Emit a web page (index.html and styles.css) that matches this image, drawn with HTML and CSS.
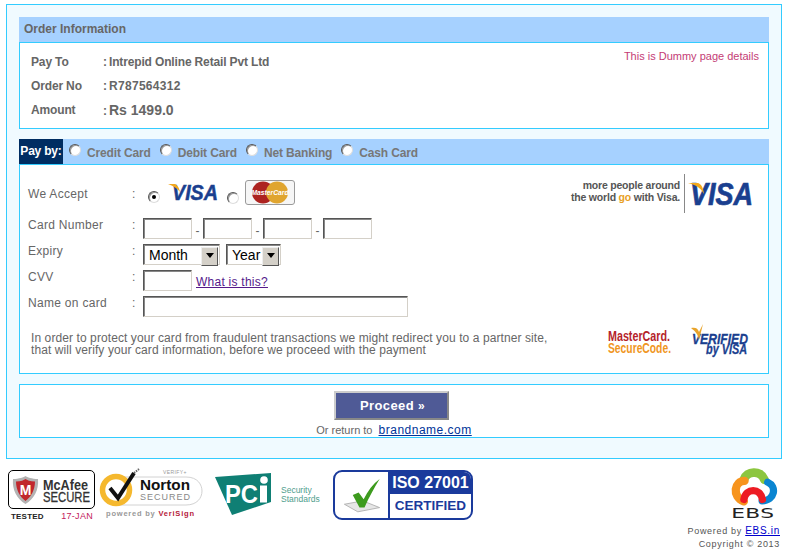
FILE: index.html
```html
<!DOCTYPE html>
<html lang="en">
<head>
<meta charset="utf-8">
<title>Payment</title>
<link rel="stylesheet" href="styles.css">
</head>
<body>
<main class="wrap">
  <section class="panel">
    <h2 class="panel-head">Order Information</h2>
    <div class="panel-body order">
      <dl class="order-list">
        <div class="order-row"><dt>Pay To</dt><dd><span class="sep">:</span>Intrepid Online Retail Pvt Ltd</dd></div>
        <div class="order-row"><dt>Order No</dt><dd class="order-no"><span class="sep">:</span>R787564312</dd></div>
        <div class="order-row"><dt>Amount</dt><dd class="amount"><span class="sep">:</span>Rs 1499.0</dd></div>
      </dl>
      <p class="dummy">This is Dummy page details</p>
    </div>
  </section>

  <section class="panel pay">
    <div class="pay-head">
      <span class="pay-by">Pay by:</span>
      <label class="tab"><input type="radio" name="mode" class="radio">Credit Card</label>
      <label class="tab"><input type="radio" name="mode" class="radio">Debit Card</label>
      <label class="tab"><input type="radio" name="mode" class="radio">Net Banking</label>
      <label class="tab"><input type="radio" name="mode" class="radio">Cash Card</label>
    </div>
    <div class="panel-body card">
      <div class="form-top">
        <div class="form-grid">
          <div class="lbl accept-lbl">We Accept</div><div class="colon accept-lbl">:</div>
          <div class="accept">
            <input type="radio" name="brand" class="radio" checked>
            <svg class="visa-small" viewBox="0 0 50 19" aria-label="Visa">
              <text x="4" y="17" textLength="46" lengthAdjust="spacingAndGlyphs" class="visa-text vs">VISA</text>
              <path d="M0 1 L7 1 C9 2 11 4 12 9 C9 5 5 3 0 1Z" fill="#f2a81d"/>
            </svg>
            <input type="radio" name="brand" class="radio">
            <span class="mc-badge">
              <svg viewBox="0 0 44 23" class="mc-svg">
                <circle cx="15" cy="11.500" r="11" fill="#ad2320"/>
                <circle cx="29" cy="11.500" r="11" fill="#e0a52f"/>
                <text x="22" y="14" text-anchor="middle" textLength="37" lengthAdjust="spacingAndGlyphs" class="mc-text">MasterCard</text>
              </svg>
            </span>
          </div>

          <div class="lbl">Card Number</div><div class="colon">:</div>
          <div class="fields">
            <input class="field num" type="text"><span class="dash">-</span>
            <input class="field num" type="text"><span class="dash">-</span>
            <input class="field num" type="text"><span class="dash">-</span>
            <input class="field num" type="text">
          </div>

          <div class="lbl">Expiry</div><div class="colon">:</div>
          <div class="fields selects">
            <span class="sel sel-month"><select><option>Month</option></select></span>
            <span class="sel sel-year"><select><option>Year</option></select></span>
          </div>

          <div class="lbl">CVV</div><div class="colon">:</div>
          <div class="fields">
            <input class="field num" type="text"><a class="what" href="#">What is this?</a>
          </div>

          <div class="lbl">Name on card</div><div class="colon">:</div>
          <div class="fields"><input class="field name" type="text"></div>
        </div>
        <div class="visa-ad">
          <p class="visa-slogan">more people around<br>the world <span class="go">go</span> with Visa.</p>
          <span class="visa-rule"></span>
          <svg class="visa-large" viewBox="0 0 66 24" aria-label="Visa">
            <text x="2" y="23" textLength="63" lengthAdjust="spacingAndGlyphs" class="visa-text vl">VISA</text>
            <path d="M0 1 L10 1 C13 2 15 5 16 12 C13 6 8 3 0 1Z" fill="#f2a81d"/>
          </svg>
        </div>
      </div>
      <div class="form-foot">
        <p class="notice">In order to protect your card from fraudulent transactions we might redirect you to a partner site,<br>that will verify your card information, before we proceed with the payment</p>
        <div class="secure">
          <svg class="mc-secure" viewBox="0 0 64 26">
            <text x="0" y="12" textLength="62" lengthAdjust="spacingAndGlyphs" class="msc red">MasterCard.</text>
            <text x="0" y="24" textLength="63" lengthAdjust="spacingAndGlyphs" class="msc orange">SecureCode.</text>
          </svg>
          <svg class="verified" viewBox="0 0 60 32">
            <text x="2" y="20" textLength="56" lengthAdjust="spacingAndGlyphs" class="vbv">VERIFIED</text>
            <text x="16" y="30" textLength="41" lengthAdjust="spacingAndGlyphs" class="vbv">by VISA</text>
            <path d="M1 4 C5 3 8 4 9 8 L13 0 L9 16 C8 10 5 7 1 4Z" fill="#e8a32a"/>
          </svg>
        </div>
      </div>
    </div>
  </section>

  <section class="proceed-box">
    <button class="proceed" type="button">Proceed <span class="chev">»</span></button>
    <p class="return">Or return to <a href="#">brandname.com</a></p>
  </section>
</main>

<footer class="foot">
  <div class="seals">
    <div class="mcafee">
      <div class="mcafee-box">
        <svg class="mcafee-svg" viewBox="0 0 85 37">
          <path d="M4 8 C10 8 15 6 16.500 5 C18 6 23 8 29 8 C30 19 25 28 16.500 33 C8 28 3 19 4 8Z" fill="#b3b3b3"/>
          <path d="M7 10.500 C12 10.500 15 9 16.500 8 C18 9 21 10.500 26 10.500 C26 19 22 26 16.500 30 C11 26 7 19 7 10.500Z" fill="#c1272d"/>
          <text x="16.500" y="24" text-anchor="middle" class="shield-m">M</text>
          <text x="34" y="19" textLength="45" lengthAdjust="spacingAndGlyphs" class="mcafee-name">McAfee</text>
          <text x="34" y="31" textLength="47" lengthAdjust="spacingAndGlyphs" class="mcafee-secure">SECURE</text>
        </svg>
      </div>
      <div class="mcafee-meta"><span class="tested">TESTED</span><span class="date">17-JAN</span></div>
    </div>

    <svg class="norton" viewBox="0 0 106 52">
      <text x="65" y="6" class="nt-verify">VERIFY+</text>
      <path d="M18 9 H88 C100 9 104 17 104 23 C104 30 99 37 88 37 H18Z" fill="#fff" stroke="#d2d2d2" stroke-width="1"/>
      <circle cx="18" cy="22" r="13.500" fill="#fff" stroke="#f5b82e" stroke-width="5.500"/>
      <path d="M12 20 L20 30 L36 5" fill="none" stroke="#111" stroke-width="4"/>
      <path d="M36 5 L41 1" fill="none" stroke="#666" stroke-width="2" stroke-dasharray="1.500 1"/>
      <text x="42" y="22" textLength="50" lengthAdjust="spacingAndGlyphs" class="nt-name">Norton</text>
      <text x="42" y="32" textLength="50" class="nt-secured">SECURED</text>
      <text x="8" y="48" textLength="88" class="nt-power">powered by <tspan class="nt-vs">VeriSign</tspan></text>
    </svg>

    <svg class="pci" viewBox="0 0 110 46">
      <path d="M0 5 L56 1 L56 30 L17 43Z" fill="#0f7f74"/>
      <text x="10" y="31" textLength="33" lengthAdjust="spacingAndGlyphs" class="pci-l">PC</text>
      <rect x="45" y="13.500" width="7" height="17" fill="#fff"/>
      <circle cx="49" cy="8" r="3.800" fill="#fff"/>
      <text x="66" y="21" class="pci-s">Security</text>
      <text x="66" y="30" class="pci-s">Standards</text>
    </svg>

    <div class="iso">
      <div class="iso-check">
        <svg viewBox="0 0 50 42" class="iso-svg">
          <path d="M4 32 L26 28 L46 36 L20 41Z" fill="#e6e6e6" stroke="#aaa"/>
          <path d="M14 21 L21 18 L27 26 C32 16 38 8 46 2 C40 12 33 24 28 36 L22 36Z" fill="#3d9b1e"/>
        </svg>
      </div>
      <div class="iso-text">
        <div class="iso-top">ISO 27001</div>
        <div class="iso-bot">CERTIFIED</div>
      </div>
    </div>
  </div>

  <div class="ebs">
    <svg class="ebs-logo" viewBox="205 20 145 160">
      <path d="M250 58 C258 32 300 28 312 58" fill="none" stroke="#8cc63f" stroke-width="27" stroke-linecap="round"/>
      <path d="M252 62 C222 62 212 108 250 124" fill="none" stroke="#f7941d" stroke-width="25" stroke-linecap="round"/>
      <path d="M322 66 C350 78 344 122 305 122" fill="none" stroke="#0a85d1" stroke-width="22" stroke-linecap="round"/>
      <path d="M250 118 C256 82 300 82 306 118" fill="none" stroke="#ed1c24" stroke-width="22" stroke-linecap="round"/>
      <text x="277" y="175" text-anchor="middle" textLength="130" lengthAdjust="spacingAndGlyphs" class="ebs-name">EBS</text>
    </svg>
    <p class="powered">Powered by <a href="#">EBS.in</a></p>
    <p class="copy">Copyright © 2013</p>
  </div>
</footer>
</body>
</html>
```

FILE: styles.css
```css
* { box-sizing: border-box; }
html, body { margin: 0; padding: 0; }
body {
  background: #fff;
  color: #666;
  font-family: "Liberation Sans", Arial, sans-serif;
  font-size: 12px;
  height: 554px;
  overflow: hidden;
}
p, h2, dl, dd, dt { margin: 0; }
svg { overflow: visible; }

.wrap {
  width: 776px;
  height: 455px;
  margin: 4px 0 0 6px;
  padding: 12px;
  border: 1px solid #33ccff;
  background: #f0faff;
}
.panel-head {
  height: 25px;
  padding: 0 5px;
  background: #a6d1ff;
  color: #666;
  font-size: 12px;
  line-height: 24px;
  font-weight: bold;
}
.panel-body {
  border: 1px solid #33ccff;
  background: #fff;
}
.order {
  height: 87px;
  display: flex;
  justify-content: space-between;
  padding: 7px 9px 0 11px;
}
.order-row {
  display: flex;
  height: 24px;
  align-items: center;
  font-weight: bold;
  letter-spacing: -0.15px;
}
.order-row dt { width: 72px; }
.order-row dd { white-space: nowrap; }
.sep { display: inline-block; width: 6px; font-size: 12px; }
.order-row .order-no { letter-spacing: 0.3px; }
.order-row .amount { font-size: 14px; letter-spacing: 0; }
.dummy { color: #c43c75; font-size: 11px; line-height: 12px; }

.pay { margin-top: 10px; }
.pay-head {
  display: flex;
  align-items: center;
  height: 25px;
  background: #a6d1ff;
}
.pay-by {
  width: 44px;
  height: 25px;
  line-height: 24px;
  background: #002d62;
  color: #fff;
  font-weight: bold;
  text-align: center;
  letter-spacing: -0.2px;
  margin-right: 6px;
  white-space: nowrap;
}
.tab {
  display: flex;
  align-items: center;
  font-weight: bold;
  color: #777;
  margin-right: 9px;
  padding-top: 3px;
  letter-spacing: -0.15px;
  white-space: nowrap;
}
.tab .radio { margin: -7px 6px 0 0; }

.radio {
  appearance: none;
  -webkit-appearance: none;
  width: 12px;
  height: 12px;
  margin: 0;
  flex: none;
  border-radius: 50%;
  background: #fff;
  border: 1px solid;
  border-color: #555 #ddd #ddd #555;
  box-shadow: inset 1px 1px 0 #999;
  position: relative;
}
.radio:checked::after {
  content: "";
  position: absolute;
  left: 3px;
  top: 3px;
  width: 4px;
  height: 4px;
  border-radius: 50%;
  background: #000;
}

.card {
  height: 210px;
  padding: 0;
}
.form-top {
  display: flex;
  justify-content: space-between;
  padding: 9px 14px 0 8px;
}
.form-grid {
  display: grid;
  grid-template-columns: 104px 11px 1fr;
  grid-template-rows: 44px 26px 26px 26px 26px;
  align-items: start;
}
.form-grid > .accept { grid-column: 3; height: 44px; }
.lbl, .colon {
  letter-spacing: 0.3px;
  line-height: 14px;
  white-space: nowrap;
}
.accept-lbl { padding-top: 13px; }
.accept {
  display: flex;
  align-items: flex-start;
}
.accept .radio { margin: 17px 0 0 5px; }
.visa-small { width: 50px; height: 19px; margin: 9px 0 0 8px; flex: none; }
.accept .visa-small + .radio { margin: 18px 0 0 9px; }
.accept .radio + .mc-badge { margin-left: 6px; }
.visa-text {
  font-family: "Liberation Sans", Arial, sans-serif;
  font-weight: bold;
  font-style: italic;
  fill: #1a3f8f;
  stroke: #1a3f8f;
}
.vs { font-size: 22px; stroke-width: 0.5px; }
.vl { font-size: 31px; stroke-width: 0.7px; }
.mc-badge {
  display: block;
  width: 50px;
  height: 25px;
  margin-top: 6px;
  border: 1px solid #9a9a9a;
  border-radius: 3px;
  background: #f6f6f6;
  padding: 0 2px;
}
.mc-svg { display: block; width: 44px; height: 23px; }
.mc-text {
  font-family: "Liberation Sans", Arial, sans-serif;
  font-size: 8px;
  font-style: italic;
  font-weight: bold;
  fill: #fff;
}

.fields {
  display: flex;
  align-items: flex-start;
  height: 26px;
  color: #666;
}
.field {
  height: 21px;
  padding: 0 2px;
  background: #fff;
  border: 1px solid;
  border-color: #555 #d4d0c8 #d4d0c8 #555;
  box-shadow: inset 1px 1px 0 #888;
  border-radius: 0;
  margin: 0;
  outline: none;
}
.num { width: 49px; }
.name { width: 265px; }
.dash { width: 11px; text-align: center; line-height: 26px; }
.what { margin-left: 4px; color: #551a8b; letter-spacing: 0.25px; line-height: 24px; text-decoration: underline; }

.selects { gap: 6px; }
.sel {
  display: block;
  position: relative;
  height: 21px;
  border: 1px solid;
  border-color: #555 #d4d0c8 #d4d0c8 #555;
  box-shadow: inset 1px 1px 0 #888;
  background: #fff;
}
.sel-month { width: 77px; }
.sel-year { width: 55px; }
.sel select {
  appearance: none;
  -webkit-appearance: none;
  display: block;
  width: 100%;
  height: 19px;
  border: 0;
  margin: 0;
  padding: 2px 0 0 5px;
  background: transparent;
  color: #000;
  font-family: "Liberation Sans", Arial, sans-serif;
  font-size: 14px;
  line-height: 17px;
  outline: none;
}
.sel::after {
  content: "";
  position: absolute;
  right: 1px;
  top: 2px;
  width: 15px;
  height: 17px;
  background: #d4d0c8;
  border: 1px solid;
  border-color: #eee #555 #555 #eee;
}
.sel::before {
  content: "";
  position: absolute;
  z-index: 1;
  right: 5px;
  top: 8px;
  border: 4px solid transparent;
  border-top: 5px solid #000;
  border-bottom: 0;
}

.visa-ad {
  display: flex;
  align-items: center;
  height: 39px;
}
.visa-slogan {
  font-size: 10.500px;
  line-height: 12px;
  font-weight: bold;
  text-align: right;
  color: #555;
  white-space: nowrap;
  letter-spacing: -0.2px;
  margin-top: -6px;
}
.go { color: #e8a01f; }
.visa-rule {
  display: block;
  width: 1px;
  height: 39px;
  margin: 0 3px 0 4px;
  background: #888;
}
.visa-large { width: 66px; height: 24px; margin-top: 0; }

.form-foot {
  display: flex;
  justify-content: space-between;
  padding: 0 18px 0 11px;
}
.notice {
  line-height: 12px;
  letter-spacing: 0.09px;
  white-space: nowrap;
  padding-top: 10px;
}
.secure {
  display: flex;
  align-items: flex-start;
  gap: 18px;
  margin-top: 2px;
}
.mc-secure { width: 64px; height: 26px; margin-top: 5px; }
.verified { width: 60px; height: 32px; }
.msc {
  font-family: "Liberation Sans", Arial, sans-serif;
  font-weight: bold;
  font-size: 14px;
}
.red { fill: #b5232a; }
.orange { fill: #f0961e; }
.vbv {
  font-family: "Liberation Sans", Arial, sans-serif;
  font-weight: bold;
  font-style: italic;
  font-size: 14px;
  fill: #1a3f8f;
  stroke: #1a3f8f;
  stroke-width: 0.3px;
}

.proceed-box {
  margin-top: 10px;
  height: 54px;
  border: 1px solid #33ccff;
  background: #fff;
  text-align: center;
  padding-top: 6px;
}
.proceed {
  display: block;
  width: 115px;
  height: 29px;
  margin: 0 auto;
  transform: translateX(-3px);
  padding: 0 0 0 3px;
  background: #4f5a96;
  border: 2px solid;
  border-color: #ccc #888 #888 #ccc;
  color: #fff;
  font-family: "Liberation Sans", Arial, sans-serif;
  font-size: 13px;
  font-weight: bold;
  letter-spacing: 0.4px;
}
.chev { font-size: 12px; }
.return {
  font-size: 11px;
  line-height: 14px;
  margin-top: 3px;
}
.return a {
  color: #003399;
  font-size: 12px;
  letter-spacing: 0.5px;
  margin-left: 3px;
}

.foot {
  display: flex;
  justify-content: space-between;
  align-items: flex-start;
  padding: 9px 7px 0 8px;
}
.seals { display: flex; align-items: flex-start; }
.mcafee { width: 87px; margin-top: 2px; flex: none; }
.mcafee-box {
  height: 39px;
  border: 1px solid #000;
  border-radius: 5px;
}
.mcafee-svg { display: block; width: 85px; height: 37px; }
.shield-m {
  font-family: "Liberation Sans", Arial, sans-serif;
  font-size: 14px;
  font-weight: bold;
  fill: #fff;
}
.mcafee-name {
  font-family: "Liberation Sans", Arial, sans-serif;
  font-size: 15px;
  font-weight: bold;
  fill: #333;
}
.mcafee-secure {
  font-family: "Liberation Sans", Arial, sans-serif;
  font-size: 14.500px;
  fill: #333;
  stroke: #333;
  stroke-width: 0.3px;
}
.mcafee-meta {
  display: flex;
  justify-content: space-between;
  font-size: 8px;
  line-height: 11px;
  padding: 2px 2px 0 3px;
  letter-spacing: 0.4px;
}
.tested { color: #222; font-weight: bold; letter-spacing: 0.2px; }
.date { color: #c2185b; font-size: 9px; letter-spacing: 0.3px; }

.norton { width: 106px; height: 52px; margin-left: 3px; flex: none; }
.nt-verify { font-family: "Liberation Sans", Arial, sans-serif; font-size: 5px; fill: #999; letter-spacing: 0.4px; }
.nt-name { font-family: "Liberation Sans", Arial, sans-serif; font-size: 14.500px; font-weight: bold; fill: #111; }
.nt-secured { font-family: "Liberation Sans", Arial, sans-serif; font-size: 9px; fill: #888; }
.nt-power { font-family: "Liberation Sans", Arial, sans-serif; font-size: 7.500px; font-weight: bold; fill: #999; }
.nt-vs { fill: #b5183a; }

.pci { width: 110px; height: 46px; margin: 4px 0 0 11px; flex: none; }
.pci-l { font-family: "Liberation Sans", Arial, sans-serif; font-size: 26px; font-weight: bold; fill: #fff; }
.pci-s { font-family: "Liberation Sans", Arial, sans-serif; font-size: 8.500px; fill: #4f9e8e; }

.iso {
  display: flex;
  width: 140px;
  height: 50px;
  margin: 2px 0 0 8px;
  border: 2px solid #1a3a9c;
  border-radius: 9px;
  overflow: hidden;
  background: #fff;
}
.iso-check { width: 53px; padding: 5px 0 0 6px; flex: none; }
.iso-svg { display: block; width: 42px; height: 36px; }
.iso-text { flex: 1; display: flex; flex-direction: column; border-left: 2px solid #1a3a9c; }
.iso-top {
  height: 22px;
  background: #1a3a9c;
  color: #fff;
  font-size: 16px;
  font-weight: bold;
  line-height: 21px;
  text-align: center;
  white-space: nowrap;
}
.iso-bot {
  flex: 1;
  color: #1a3a9c;
  font-size: 13.500px;
  font-weight: bold;
  line-height: 24px;
  text-align: center;
}

.ebs { display: flex; flex-direction: column; align-items: flex-end; font-size: 9px; letter-spacing: 0.7px; color: #555; line-height: 13px; }
.ebs-logo { width: 48px; height: 53px; margin: -1px 3px 0 0; }
.ebs-name { font-family: "DejaVu Sans", sans-serif; font-size: 44px; fill: #222; }
.powered { margin-top: 4px; }
.powered a { color: #0000cc; font-size: 10px; }
.ebs p { white-space: nowrap; }
```
